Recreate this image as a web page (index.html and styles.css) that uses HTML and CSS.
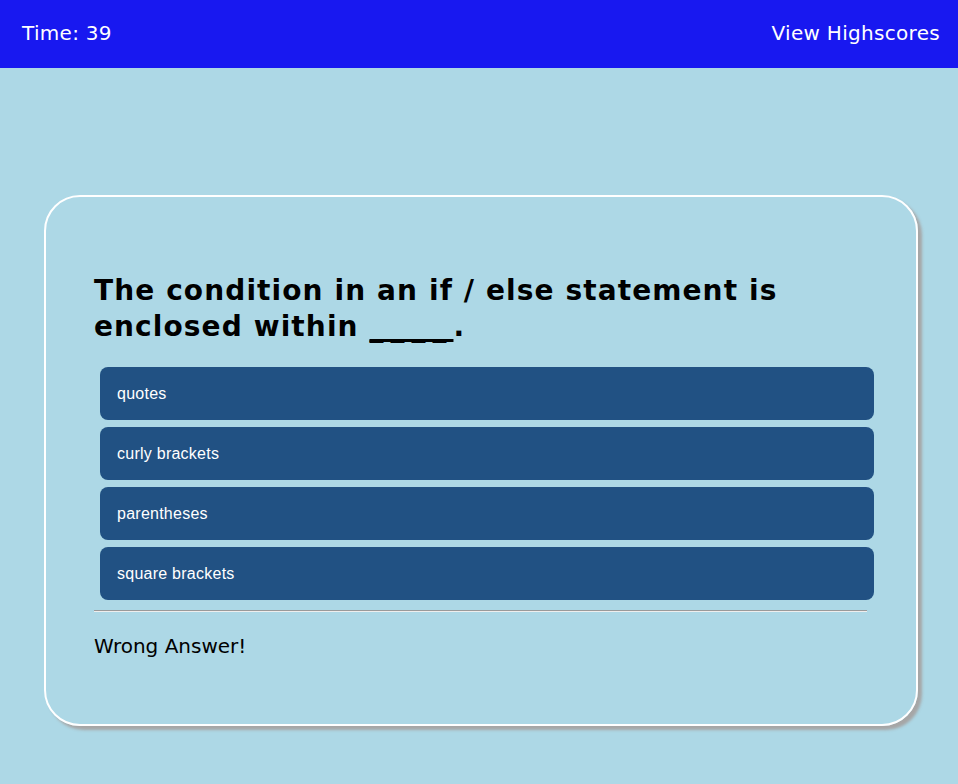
FILE: index.html
```html
<!DOCTYPE html>
<html>
<head>
<meta charset="utf-8">
<link rel="stylesheet" href="styles.css">
</head>
<body>
<header class="topbar">
  <span class="timer">Time: 39</span>
  <a class="highscores">View Highscores</a>
</header>
<main class="stage">
  <section class="card">
    <h1 class="question"><span class="qline">The condition in an if / else statement is</span> <span class="qline">enclosed within <span class="blank">____</span>.</span></h1>
    <div class="choices">
      <button class="choice">quotes</button>
      <button class="choice">curly brackets</button>
      <button class="choice">parentheses</button>
      <button class="choice">square brackets</button>
    </div>
    <hr class="divider">
    <p class="feedback">Wrong Answer!</p>
  </section>
</main>
</body>
</html>
```

FILE: styles.css
```css
html, body {
  margin: 0;
  padding: 0;
}
body {
  background: #add8e6;
  font-family: Verdana, "DejaVu Sans", sans-serif;
  width: 958px;
  height: 784px;
  overflow: hidden;
}
.topbar {
  height: 68px;
  background: #1818f0;
  color: #ffffff;
  display: flex;
  justify-content: space-between;
  align-items: center;
  padding: 0 18px 2px 22px;
  box-sizing: border-box;
  font-size: 20px;
  letter-spacing: 0.3px;
}
.highscores {
  color: #ffffff;
}
.stage {
  padding: 127px 0 0 44px;
}
.card {
  box-sizing: border-box;
  width: 874px;
  height: 531px;
  border: 2px solid #ffffff;
  border-radius: 36px;
  box-shadow: 4px 4px 3px #a6a6a6;
  padding: 76px 48px 0 48px;
}
.question {
  margin: 0 0 22px 0;
  font-size: 28px;
  line-height: 36px;
  font-weight: bold;
  letter-spacing: 1.1px;
  color: #000000;
}
.qline {
  display: block;
}
.blank {
  letter-spacing: 7px;
  text-decoration: underline;
  text-decoration-thickness: 3px;
  text-underline-offset: 3px;
  text-decoration-skip-ink: none;
}
.choices {
  display: flex;
  flex-direction: column;
  gap: 7px;
  padding-left: 6px;
}
.choice {
  height: 53px;
  width: 774px;
  border: none;
  border-radius: 8px;
  background: #215183;
  color: #ffffff;
  font-family: Arial, "Liberation Sans", sans-serif;
  font-size: 16px;
  letter-spacing: 0.25px;
  text-align: left;
  padding: 0 17px;
}
.divider {
  margin: 10px 0 0 0;
  width: 773px;
  border: none;
  border-top: 1px solid #9a9a9a;
  border-bottom: 1px solid #eeeeee;
  height: 0;
}
.feedback {
  margin: 22px 0 0 0;
  font-size: 20px;
  color: #000000;
}
```
